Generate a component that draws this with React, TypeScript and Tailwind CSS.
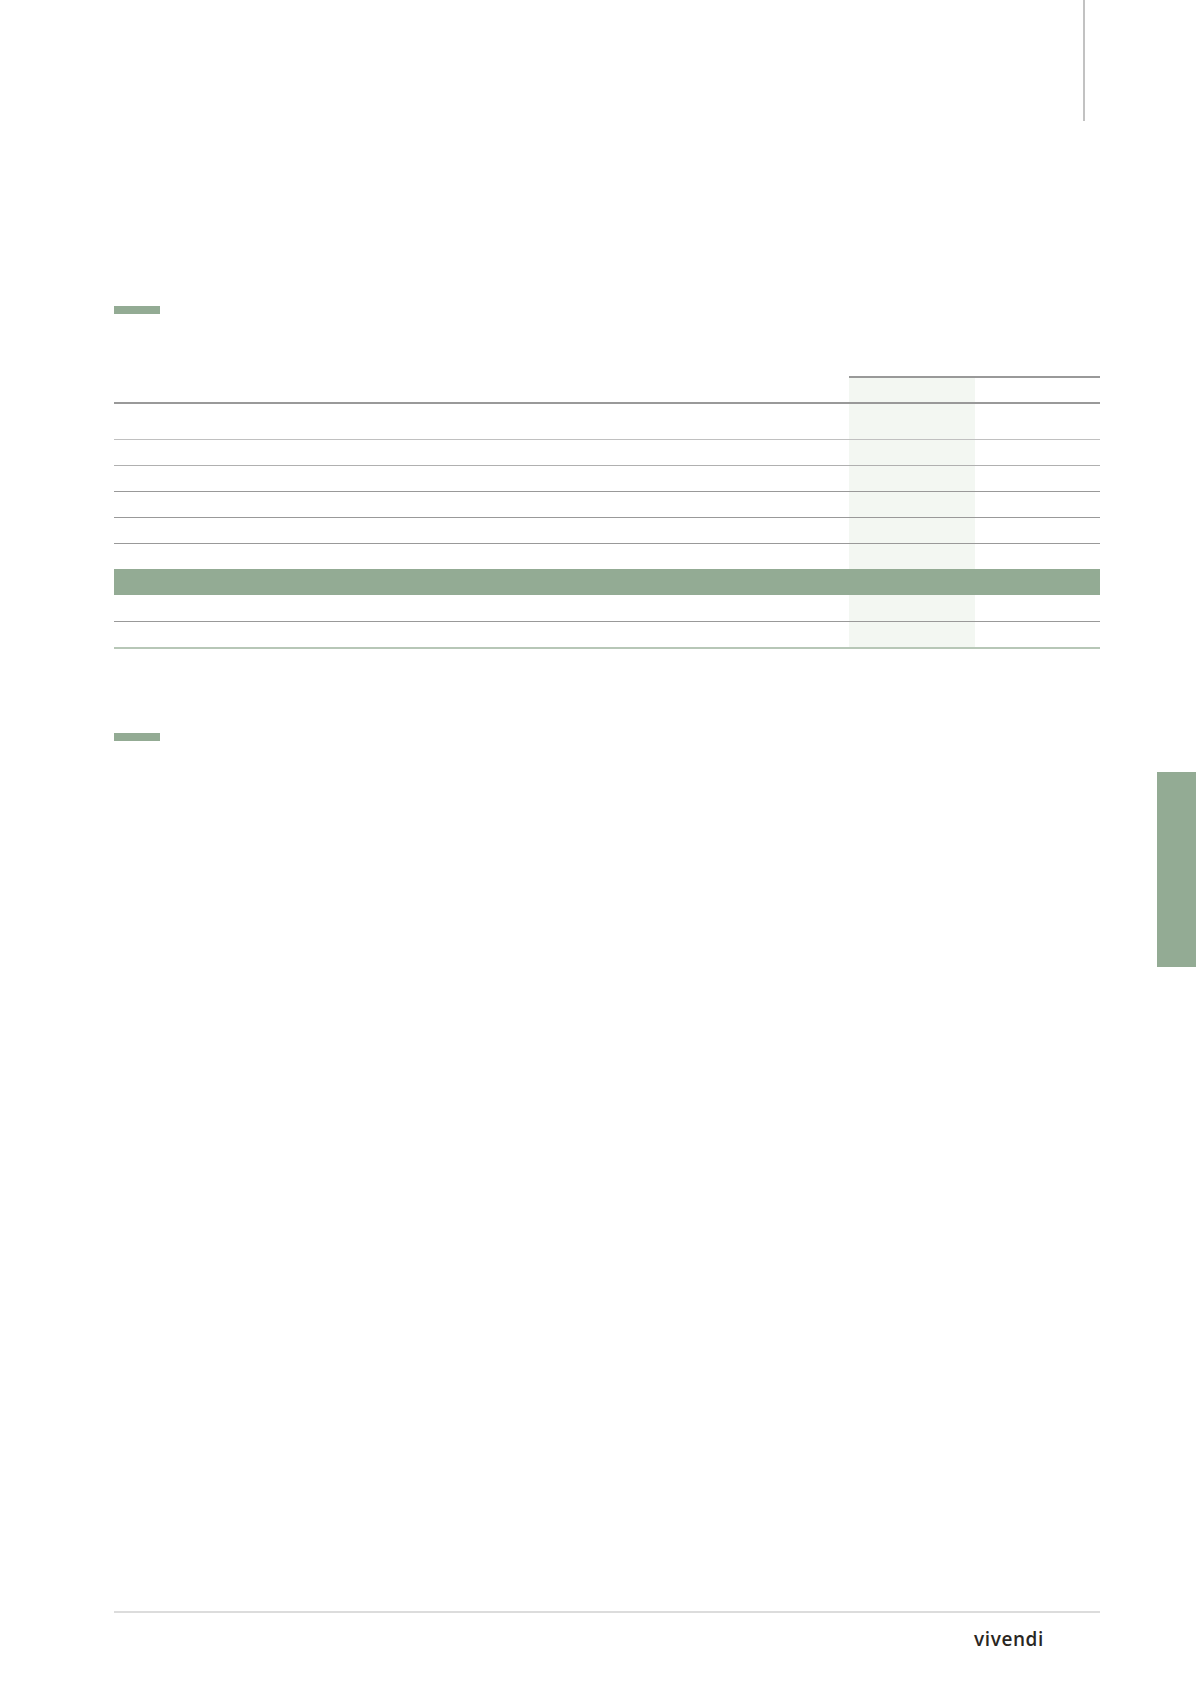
import React from "react";

const cols = "grid grid-cols-[672px_63px_126px_125px]";

function Row({
  h,
  border,
}: {
  h: string;
  border: string;
}) {
  return (
    <div className={cols}>
      <div className={`${h} ${border}`} />
      <div className={`${h} ${border}`} />
      <div className={`${h} ${border} bg-[#f3f7f2]`} />
      <div className={`${h} ${border}`} />
    </div>
  );
}

export default function App() {
  return (
    <div className="w-[1196px] h-[1692px] bg-white overflow-hidden" style={{ fontFamily: "'Open Sans', 'Liberation Sans', sans-serif" }}>
      {/* top vertical rule */}
      <div className="ml-[1083px] w-[2px] h-[121px] bg-[#c2c2c2]" />

      {/* section marker 1 */}
      <div className="ml-[114px] mt-[185px] w-[46px] h-[8px] bg-[#93ab94]" />

      {/* table */}
      <div className="ml-[114px] mt-[62px] w-[986px] flex flex-col">
        {/* header */}
        <div className={cols}>
          <div className="h-[28px] pt-[2px] border-b-2 border-[#999999]" />
          <div className="h-[28px] pt-[2px] border-b-2 border-[#999999]" />
          <div className="h-[28px] border-t-2 border-b-2 border-[#999999] bg-[#f3f7f2]" />
          <div className="h-[28px] border-t-2 border-b-2 border-[#999999]" />
        </div>
        <Row h="h-[36px]" border="border-b border-[#c0c0c0]" />
        <Row h="h-[26px]" border="border-b border-[#b0b0b0]" />
        <Row h="h-[26px]" border="border-b border-[#999999]" />
        <Row h="h-[26px]" border="border-b border-[#999999]" />
        <Row h="h-[26px]" border="border-b border-[#999999]" />
        <Row h="h-[25px]" border="" />
        <div className="h-[26px] bg-[#93ab94]" />
        <Row h="h-[27px]" border="border-b border-[#999999]" />
        <Row h="h-[27px]" border="border-b-2 border-[#b7c7b7]" />
      </div>

      {/* section marker 2 */}
      <div className="ml-[114px] mt-[84px] w-[46px] h-[8px] bg-[#93ab94]" />

      {/* side tab */}
      <div className="mt-[31px] flex justify-end">
        <div className="w-[39px] h-[195px] bg-[#93ab94]" />
      </div>

      {/* footer */}
      <div className="ml-[114px] mt-[644px] w-[986px] h-[2px] bg-[#dcdcdc]" />
      <div className="ml-[974px] mt-[17px] text-[19px] leading-[19px] font-semibold tracking-[0.6px] text-[#2a2622]">
        vivendi
      </div>
    </div>
  );
}
